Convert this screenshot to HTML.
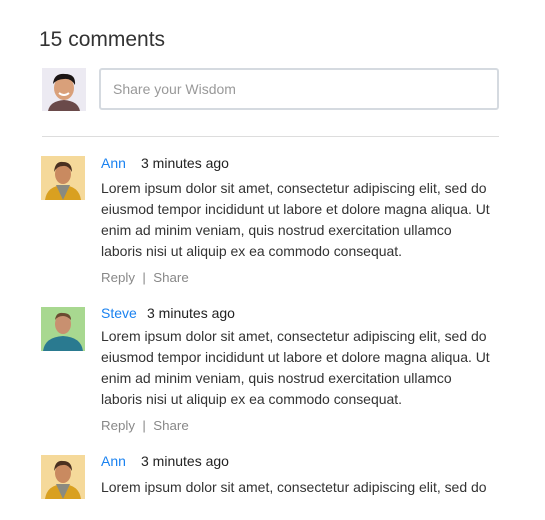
<!DOCTYPE html>
<html><head><style>
body{margin:0;background:#fff;font-family:"Liberation Sans",sans-serif;color:#333;width:545px;height:520px;overflow:hidden;position:relative}
.a{position:absolute}
h1{position:absolute;left:39px;top:28px;margin:0;font-size:21px;font-weight:normal;color:#333}
.inp{left:99px;top:68px;width:396px;height:38px;border:2px solid #d5dae0;border-radius:3px}
.inp span{position:absolute;left:12px;top:11px;font-size:14px;color:#999}
.hr{left:42px;top:136px;width:457px;height:1px;background:#ddd}
.av{width:44px;height:44px}
.name{font-size:14px;color:#1a82f0}
.time{font-size:14px;color:#222}
.t{font-size:14px;color:#333;white-space:nowrap;line-height:21px;letter-spacing:-0.02px}
.r{font-size:13.3px;color:#888}
</style></head><body>
<h1>15 comments</h1>
<svg class="a" style="left:42px;top:68px" width="44" height="43"><rect width="44" height="43" fill="#eceaf2"/><path d="M6 43 Q8 33 22 32 Q36 33 38 43Z" fill="#6a4a4a"/><ellipse cx="22" cy="20" rx="10" ry="12" fill="#d9a07a"/><path d="M11 16 Q12 5 23 6 Q34 6 33 17 Q29 10 22 11 Q15 11 11 16Z" fill="#1a1414"/><path d="M17 25 Q22 29 27 25" stroke="#fff" stroke-width="2" fill="none"/></svg>
<div class="a inp"><span>Share your Wisdom</span></div>
<div class="a hr"></div>

<svg class="a av" style="left:41px;top:156px"><rect width="44" height="44" fill="#f5d99a"/><path d="M4 44 Q6 30 22 29 Q38 30 40 44Z" fill="#d9a020"/><path d="M15 29 L22 44 L29 29Z" fill="#8a8a80"/><ellipse cx="22" cy="18" rx="8" ry="10" fill="#c98a60"/><path d="M13 16 Q14 5 22 6 Q31 6 31 16 Q27 9 22 10 Q16 10 13 16Z" fill="#4a3020"/></svg>
<div class="a name" style="left:101px;top:155px">Ann</div>
<div class="a time" style="left:141px;top:155px">3 minutes ago</div>
<div class="a t" style="left:101px;top:178px">Lorem ipsum dolor sit amet, consectetur adipiscing elit, sed do<br>eiusmod tempor incididunt ut labore et dolore magna aliqua. Ut<br>enim ad minim veniam, quis nostrud exercitation ullamco<br>laboris nisi ut aliquip ex ea commodo consequat.</div>
<div class="a r" style="left:101px;top:270px">Reply &nbsp;|&nbsp; Share</div>

<svg class="a av" style="left:41px;top:307px"><rect width="44" height="44" fill="#a8d890"/><path d="M2 44 Q4 30 22 29 Q40 30 42 44Z" fill="#2a7a90"/><ellipse cx="22" cy="17" rx="8" ry="10" fill="#c89070"/><path d="M14 13 Q15 5 22 6 Q30 6 30 13 Q26 9 22 9 Q17 9 14 13Z" fill="#6a4a30"/></svg>
<div class="a name" style="left:101px;top:305px">Steve</div>
<div class="a time" style="left:147px;top:305px">3 minutes ago</div>
<div class="a t" style="left:101px;top:326px">Lorem ipsum dolor sit amet, consectetur adipiscing elit, sed do<br>eiusmod tempor incididunt ut labore et dolore magna aliqua. Ut<br>enim ad minim veniam, quis nostrud exercitation ullamco<br>laboris nisi ut aliquip ex ea commodo consequat.</div>
<div class="a r" style="left:101px;top:418px">Reply &nbsp;|&nbsp; Share</div>

<svg class="a av" style="left:41px;top:455px"><rect width="44" height="44" fill="#f5d99a"/><path d="M4 44 Q6 30 22 29 Q38 30 40 44Z" fill="#d9a020"/><path d="M15 29 L22 44 L29 29Z" fill="#8a8a80"/><ellipse cx="22" cy="18" rx="8" ry="10" fill="#c98a60"/><path d="M13 16 Q14 5 22 6 Q31 6 31 16 Q27 9 22 10 Q16 10 13 16Z" fill="#4a3020"/></svg>
<div class="a name" style="left:101px;top:453px">Ann</div>
<div class="a time" style="left:141px;top:453px">3 minutes ago</div>
<div class="a t" style="left:101px;top:477px">Lorem ipsum dolor sit amet, consectetur adipiscing elit, sed do</div>
</body></html>
